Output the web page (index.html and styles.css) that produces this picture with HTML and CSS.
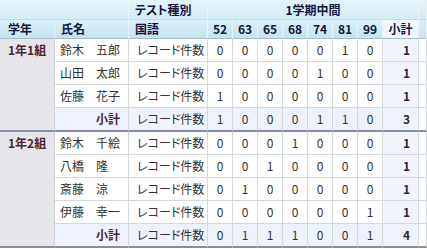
FILE: index.html
```html
<!DOCTYPE html>
<html lang="ja">
<head>
<meta charset="utf-8">
<link rel="stylesheet" href="styles.css">
</head>
<body>
<div class="grid">
  <div class="hd h1 span2"></div>
  <div class="hd h1 left">テスト種別</div>
  <div class="hd h1 center span8">1学期中間</div>
  <div class="hd h1 extra"></div>

  <div class="hd h2 left first">学年</div>
  <div class="hd h2 left">氏名</div>
  <div class="hd h2 left">国語</div>
  <div class="hd h2 center">52</div>
  <div class="hd h2 center">63</div>
  <div class="hd h2 center">65</div>
  <div class="hd h2 center">68</div>
  <div class="hd h2 center">74</div>
  <div class="hd h2 center">81</div>
  <div class="hd h2 center">99</div>
  <div class="hd h2 center sumh">小計</div>
  <div class="hd h2 extra"></div>

  <div class="grp rows4">1年1組</div>
  <div class="c name">鈴木　五郎</div><div class="c kind">レコード件数</div>
  <div class="c n">0</div><div class="c n">0</div><div class="c n">0</div><div class="c n">0</div><div class="c n">0</div><div class="c n">1</div><div class="c n">0</div>
  <div class="c tot">1</div><div class="c extra"></div>

  <div class="c name">山田　太郎</div><div class="c kind">レコード件数</div>
  <div class="c n">0</div><div class="c n">0</div><div class="c n">0</div><div class="c n">0</div><div class="c n">1</div><div class="c n">0</div><div class="c n">0</div>
  <div class="c tot">1</div><div class="c extra"></div>

  <div class="c name">佐藤　花子</div><div class="c kind">レコード件数</div>
  <div class="c n">1</div><div class="c n">0</div><div class="c n">0</div><div class="c n">0</div><div class="c n">0</div><div class="c n">0</div><div class="c n">0</div>
  <div class="c tot">1</div><div class="c extra"></div>

  <div class="c name sub end lbl">小計</div><div class="c kind sub end">レコード件数</div>
  <div class="c n sub end">1</div><div class="c n sub end">0</div><div class="c n sub end">0</div><div class="c n sub end">0</div><div class="c n sub end">1</div><div class="c n sub end">1</div><div class="c n sub end">0</div>
  <div class="c tot sub end">3</div><div class="c extra end"></div>

  <div class="grp rows5">1年2組</div>
  <div class="c name">鈴木　千絵</div><div class="c kind">レコード件数</div>
  <div class="c n">0</div><div class="c n">0</div><div class="c n">0</div><div class="c n">1</div><div class="c n">0</div><div class="c n">0</div><div class="c n">0</div>
  <div class="c tot">1</div><div class="c extra"></div>

  <div class="c name">八橋　隆</div><div class="c kind">レコード件数</div>
  <div class="c n">0</div><div class="c n">0</div><div class="c n">1</div><div class="c n">0</div><div class="c n">0</div><div class="c n">0</div><div class="c n">0</div>
  <div class="c tot">1</div><div class="c extra"></div>

  <div class="c name">斎藤　涼</div><div class="c kind">レコード件数</div>
  <div class="c n">0</div><div class="c n">1</div><div class="c n">0</div><div class="c n">0</div><div class="c n">0</div><div class="c n">0</div><div class="c n">0</div>
  <div class="c tot">1</div><div class="c extra"></div>

  <div class="c name">伊藤　幸一</div><div class="c kind">レコード件数</div>
  <div class="c n">0</div><div class="c n">0</div><div class="c n">0</div><div class="c n">0</div><div class="c n">0</div><div class="c n">0</div><div class="c n">1</div>
  <div class="c tot">1</div><div class="c extra"></div>

  <div class="c name sub end lbl">小計</div><div class="c kind sub end">レコード件数</div>
  <div class="c n sub end">0</div><div class="c n sub end">1</div><div class="c n sub end">1</div><div class="c n sub end">1</div><div class="c n sub end">0</div><div class="c n sub end">0</div><div class="c n sub end">1</div>
  <div class="c tot sub end">4</div><div class="c extra end"></div>
</div>
</body>
</html>
```

FILE: styles.css
```css
html, body {
  margin: 0;
  padding: 0;
  background: #ffffff;
  overflow: hidden;
}
body {
  width: 427px;
  height: 249px;
  font-family: "Noto Sans CJK JP", "Noto Sans", sans-serif;
  font-size: 12px;
  font-feature-settings: "palt";
  color: #333333;
}
.grid {
  display: grid;
  grid-template-columns: 55px 74px 79px repeat(7, 25px) 36px 8px;
  grid-template-rows: 20px 19px 23px 23px 23px 24px 23px 23px 23px 23px 24px;
  width: 427px;
}
.grid > div {
  box-sizing: border-box;
  display: flex;
  align-items: center;
  white-space: nowrap;
  overflow: hidden;
  line-height: 1;
}
.hd {
  font-weight: bold;
  color: #14143c;
  border-right: 1px solid #e9f4f9;
}
.h1 {
  background: linear-gradient(#e4f3fa, #d2ebf5);
  border-bottom: 1px solid #c4dbe6;
}
.h2 {
  background: linear-gradient(#dbeff8, #c4e4f0);
  border-bottom: 1px solid #a9bcc6;
}
.h2.sumh {
  background: #f1f4fb;
}
.span2 { grid-column: span 2; }
.span8 { grid-column: span 8; }
.left { padding-left: 6px; }
.first { padding-left: 8px; }
.center { justify-content: center; }

.grp {
  align-items: flex-start !important;
  padding: 5px 0 0 8px;
  background: #e6e6ea;
  border-right: 1px solid #cfd1d6;
  border-bottom: 2px solid #8a8aa6;
  font-weight: bold;
  color: #4a2533;
}
.rows4 { grid-row: span 4; }
.rows5 { grid-row: span 5; }
.c {
  border-right: 1px solid #d6d9dc;
  border-bottom: 1px solid #d6d9dc;
  background: #ffffff;
}
.name { padding-left: 5px; }
.kind { padding-left: 8px; }
.n { justify-content: center; }
.tot {
  justify-content: flex-end;
  padding-right: 8px;
  background: #f2f4fb;
  font-weight: bold;
  color: #3b2236;
}
.sub { background: #eef2fc; }
.tot.sub { background: #eef2fc; }
.lbl {
  justify-content: flex-end;
  padding-right: 8px;
  font-weight: bold;
  color: #4a2533;
}
.end { border-bottom: 2px solid #8a8aa6; }
```
